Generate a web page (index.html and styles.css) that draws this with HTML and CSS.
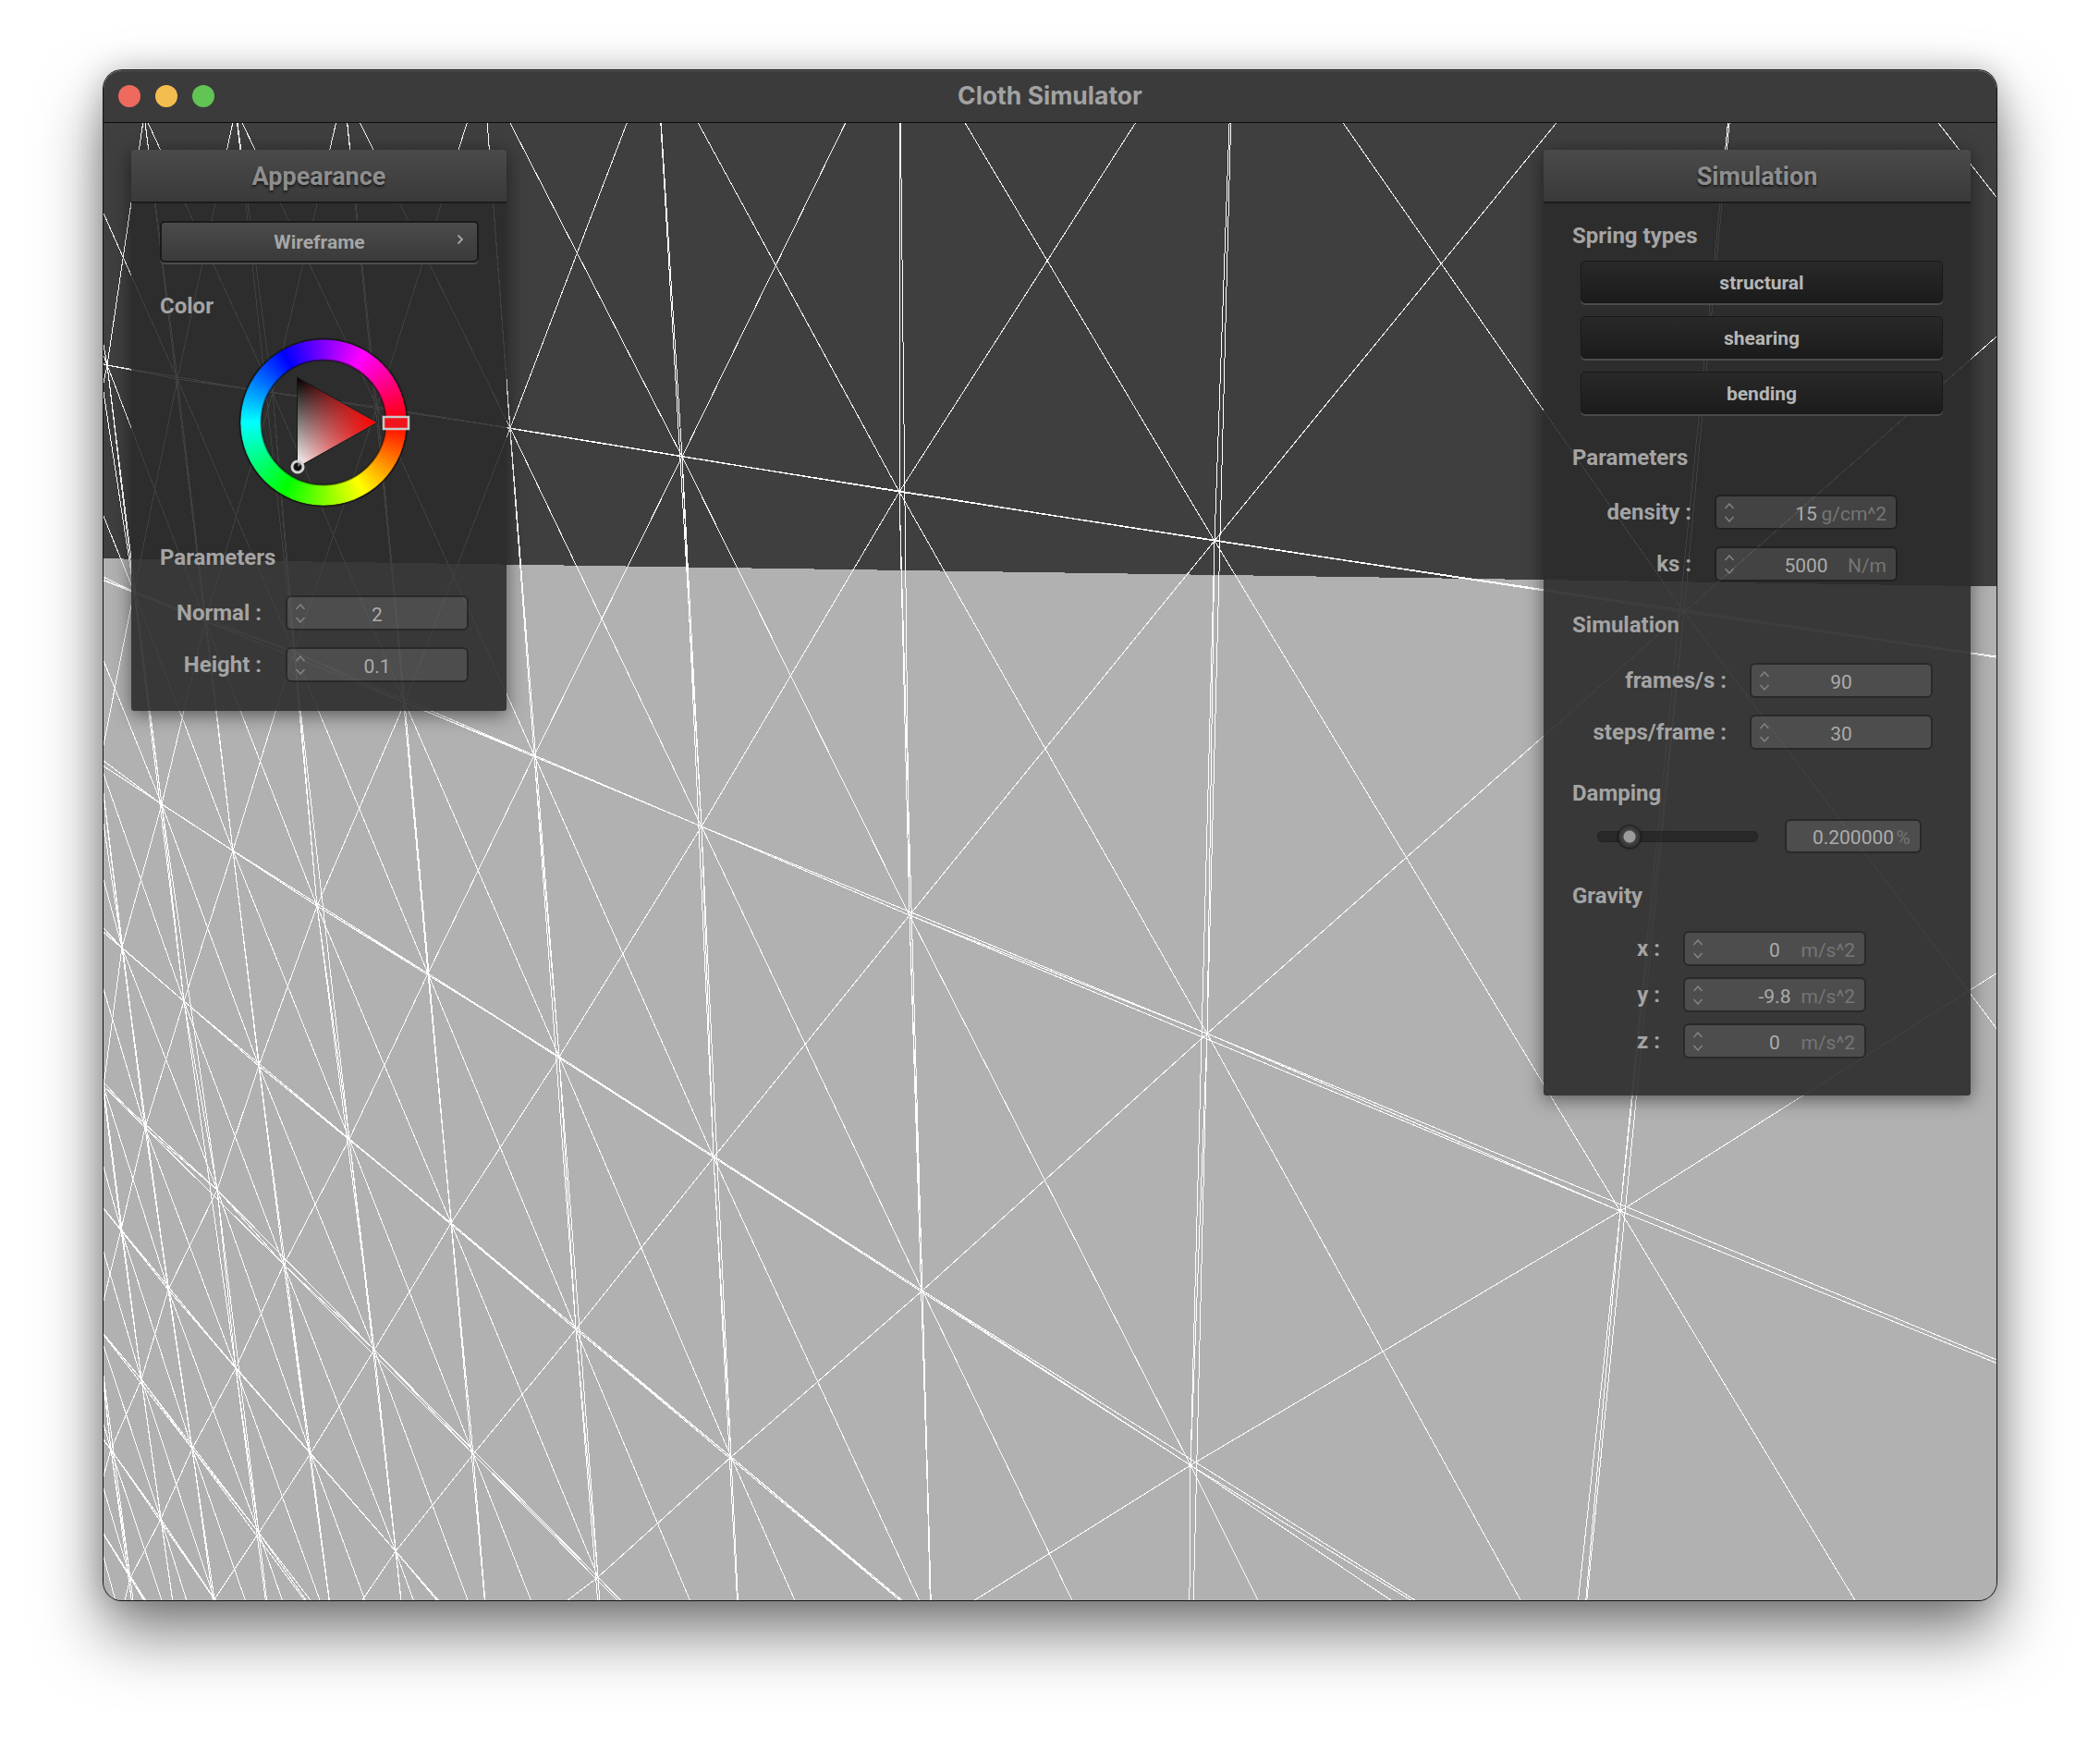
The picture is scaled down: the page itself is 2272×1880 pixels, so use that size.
FILE: index.html
```html
<!DOCTYPE html>
<html lang="en">
<head>
<meta charset="utf-8">
<title>Cloth Simulator</title>
<link rel="stylesheet" href="styles.css">
</head>
<body>
<main class="window">
  <header class="titlebar">
    <div class="lights">
      <span class="light light--close"></span>
      <span class="light light--min"></span>
      <span class="light light--max"></span>
    </div>
    <h1 class="titlebar__title">Cloth Simulator</h1>
  </header>
  <section class="canvas">
    <svg class="scene" viewBox="112 133 2048 1598" aria-hidden="true">
      <polygon class="scene__floor" points="100,604 2170,634.5 2170,1740 100,1740"></polygon>
      <path id="mesh" class="scene__mesh"></path>
    </svg>

    <aside class="panel panel--appearance">
      <h2 class="panel__head">Appearance</h2>
      <div class="panel__body">
        <button class="btn btn--popup">Wireframe
          <svg class="btn__chevron" viewBox="0 0 8 12"><path d="M1.5 1.5 L6 6 L1.5 10.5"></path></svg>
        </button>
        <h3 class="group group--color">Color</h3>
        <div class="wheel">
          <div class="wheel__ring"></div>
          <svg class="wheel__overlay" viewBox="0 0 180 180">
            <defs>
              <linearGradient id="sv-value" gradientUnits="userSpaceOnUse" x1="62" y1="138" x2="62" y2="42">
                <stop offset="0" stop-color="#fff"></stop>
                <stop offset="1" stop-color="#000"></stop>
              </linearGradient>
              <linearGradient id="sv-hue" gradientUnits="userSpaceOnUse" x1="62" y1="90" x2="147" y2="90">
                <stop offset="0" stop-color="#f00" stop-opacity="0"></stop>
                <stop offset="1" stop-color="#f00"></stop>
              </linearGradient>
            </defs>
            <circle class="wheel__edge" cx="90" cy="90" r="90.5"></circle>
            <circle class="wheel__edge" cx="90" cy="90" r="67.5"></circle>
            <polygon class="wheel__tri-edge" points="147,90 62,42 62,138"></polygon>
            <polygon fill="url(#sv-value)" points="147,90 62,42 62,138"></polygon>
            <polygon fill="url(#sv-hue)" points="147,90 62,42 62,138"></polygon>
            <circle class="wheel__pick" cx="62" cy="138" r="6"></circle>
            <rect class="wheel__hue" x="155" y="84" width="27" height="13"></rect>
          </svg>
        </div>
        <h3 class="group group--params">Parameters</h3>
        <div class="fields fields--low">
          <div class="field field--appearance">
            <label class="field__label">Normal :</label>
            <div class="num">
              <svg class="num__spin" viewBox="0 0 10 21"><path d="M0.5 6 L5 1 L9.5 6 M0.5 15 L5 20 L9.5 15"></path></svg>
              <span class="num__value">2</span>
            </div>
          </div>
          <div class="field field--appearance">
            <label class="field__label">Height :</label>
            <div class="num">
              <svg class="num__spin" viewBox="0 0 10 21"><path d="M0.5 6 L5 1 L9.5 6 M0.5 15 L5 20 L9.5 15"></path></svg>
              <span class="num__value">0.1</span>
            </div>
          </div>
        </div>
      </div>
    </aside>

    <aside class="panel panel--simulation">
      <h2 class="panel__head">Simulation</h2>
      <div class="panel__body">
        <h3 class="group group--springs">Spring types</h3>
        <div class="toggles">
          <button class="btn btn--on">structural</button>
          <button class="btn btn--on">shearing</button>
          <button class="btn btn--on">bending</button>
        </div>
        <h3 class="group group--sim-params">Parameters</h3>
        <div class="fields">
          <div class="field field--params">
            <label class="field__label">density :</label>
            <div class="num">
              <svg class="num__spin" viewBox="0 0 10 21"><path d="M0.5 6 L5 1 L9.5 6 M0.5 15 L5 20 L9.5 15"></path></svg>
              <span class="num__value">15</span>
              <span class="num__unit">g/cm^2</span>
            </div>
          </div>
          <div class="field field--params">
            <label class="field__label">ks :</label>
            <div class="num">
              <svg class="num__spin" viewBox="0 0 10 21"><path d="M0.5 6 L5 1 L9.5 6 M0.5 15 L5 20 L9.5 15"></path></svg>
              <span class="num__value">5000</span>
              <span class="num__unit">N/m</span>
            </div>
          </div>
        </div>
        <h3 class="group group--sim">Simulation</h3>
        <div class="fields fields--low">
          <div class="field field--rate">
            <label class="field__label">frames/s :</label>
            <div class="num">
              <svg class="num__spin" viewBox="0 0 10 21"><path d="M0.5 6 L5 1 L9.5 6 M0.5 15 L5 20 L9.5 15"></path></svg>
              <span class="num__value">90</span>
            </div>
          </div>
          <div class="field field--rate">
            <label class="field__label">steps/frame :</label>
            <div class="num">
              <svg class="num__spin" viewBox="0 0 10 21"><path d="M0.5 6 L5 1 L9.5 6 M0.5 15 L5 20 L9.5 15"></path></svg>
              <span class="num__value">30</span>
            </div>
          </div>
        </div>
        <h3 class="group group--damping">Damping</h3>
        <div class="damping">
          <div class="slider"><span class="slider__thumb"></span></div>
          <div class="num num--plain">
            <span></span>
            <span class="num__value">0.200000</span>
            <span class="num__unit">%</span>
          </div>
        </div>
        <h3 class="group group--gravity">Gravity</h3>
        <div class="fields fields--tight">
          <div class="field field--gravity">
            <label class="field__label">x :</label>
            <div class="num">
              <svg class="num__spin" viewBox="0 0 10 21"><path d="M0.5 6 L5 1 L9.5 6 M0.5 15 L5 20 L9.5 15"></path></svg>
              <span class="num__value">0</span>
              <span class="num__unit">m/s^2</span>
            </div>
          </div>
          <div class="field field--gravity">
            <label class="field__label">y :</label>
            <div class="num">
              <svg class="num__spin" viewBox="0 0 10 21"><path d="M0.5 6 L5 1 L9.5 6 M0.5 15 L5 20 L9.5 15"></path></svg>
              <span class="num__value">-9.8</span>
              <span class="num__unit">m/s^2</span>
            </div>
          </div>
          <div class="field field--gravity">
            <label class="field__label">z :</label>
            <div class="num">
              <svg class="num__spin" viewBox="0 0 10 21"><path d="M0.5 6 L5 1 L9.5 6 M0.5 15 L5 20 L9.5 15"></path></svg>
              <span class="num__value">0</span>
              <span class="num__unit">m/s^2</span>
            </div>
          </div>
        </div>
      </div>
    </aside>
  </section>
</main>
<script src="mesh.js"></script>
</body>
</html>
```

FILE: styles.css
```css
* { box-sizing: border-box; }

html, body { margin: 0; height: 100%; background: #fff; }

body {
  padding: 76px 112px 0;
  font-family: Roboto, "Liberation Sans", sans-serif;
  overflow: hidden;
}

/* ---------- window ---------- */
.window {
  width: 2048px;
  height: 1655px;
  border-radius: 20px;
  box-shadow:
    0 0 0 1px #141414,
    0 36px 70px rgba(0, 0, 0, .5),
    0 0 34px rgba(0, 0, 0, .22);
  display: flex;
  flex-direction: column;
}

.titlebar {
  position: relative;
  flex: none;
  height: 57px;
  display: flex;
  align-items: center;
  justify-content: center;
  padding-bottom: 4px;
  background: #3b3b3b;
  border-bottom: 1px solid #0c0c0c;
  border-top: 1px solid #5a5a5a;
  border-radius: 20px 20px 0 0;
}

.titlebar__title {
  margin: 0;
  font: 700 26.5px Inter, Roboto, sans-serif;
  color: #a2a2a2;
}

.lights {
  position: absolute;
  left: 16px;
  top: 15px;
  display: flex;
  gap: 16px;
}

.light { width: 24px; height: 24px; border-radius: 50%; }
.light--close { background: #ee6a5f; }
.light--min { background: #f5bd4f; }
.light--max { background: #61c454; }

.canvas {
  position: relative;
  flex: 1;
  background: #3f3f3f;
  border-radius: 0 0 20px 20px;
  overflow: hidden;
}

.scene { display: block; width: 100%; height: 100%; }
.scene__floor { fill: #b1b1b1; shape-rendering: crispEdges; }
.scene__mesh { fill: none; stroke: #fff; stroke-width: 1; shape-rendering: crispEdges; }

/* ---------- panels ---------- */
.panel {
  position: absolute;
  top: 29px;
  background: rgba(43, 43, 43, .9);
  border-radius: 3px;
  box-shadow: 0 4px 20px rgba(0, 0, 0, .5);
}

.panel--appearance { left: 30px; width: 406px; height: 607px; }
.panel--simulation { right: 28px; width: 462px; height: 1023px; }

.panel__head {
  margin: 0;
  height: 58px;
  display: flex;
  align-items: center;
  justify-content: center;
  padding-top: 1px;
  font-size: 27px;
  font-weight: 700;
  color: #8e8e8e;
  text-shadow: 0 2px 3px rgba(0, 0, 0, .65);
  background: linear-gradient(#4a4a4a, #3a3a3a);
  border-bottom: 2px solid #1c1c1c;
  border-radius: 3px 3px 0 0;
}

.panel__body { padding: 0 30px 0 31px; }

.group {
  margin: 0;
  font-size: 24px;
  line-height: 30px;
  font-weight: 700;
  color: #a4a4a4;
}

.group--color { margin-top: 32px; }
.group--params { margin-top: 41px; }
.group--springs { margin-top: 20px; }
.group--sim-params { margin-top: 32px; }
.group--sim { margin-top: 32px; }
.group--damping { margin-top: 32px; }
.group--gravity { margin-top: 31px; }

/* ---------- buttons ---------- */
.btn {
  display: block;
  position: relative;
  font: 700 21px Roboto, sans-serif;
  text-align: center;
  border-radius: 5px;
  border: 2px solid #1b1b1b;
  padding: 1px 0 0;
  cursor: pointer;
}

.btn--popup {
  width: 345px;
  height: 45px;
  margin: 19px 0 2px;
  color: #a6a6a6;
  background: linear-gradient(#4b4b4b, #3a3a3a);
  box-shadow: 0 2px 0 #4c4c4c;
}

.btn__chevron {
  position: absolute;
  right: 14px;
  top: 12px;
  width: 8px;
  height: 12px;
  fill: none;
  stroke: #a6a6a6;
  stroke-width: 1.8;
}

.toggles {
  display: grid;
  gap: 14px;
  width: 392px;
  margin: 12px 0 0 9px;
}

.btn--on {
  height: 46px;
  color: #b6b6b6;
  border-width: 1px;
  border-color: #191919;
  background: linear-gradient(#292929, #1b1b1b);
  box-shadow: 0 2px 0 #4b4b4b;
}

/* ---------- colour wheel ---------- */
.wheel {
  position: relative;
  width: 180px;
  height: 180px;
  margin: 21px 0 0 87px;
}

.wheel__ring {
  position: absolute;
  inset: 0;
  border-radius: 50%;
  background: conic-gradient(from 90deg, #f00, #ff0, #0f0, #0ff, #00f, #f0f, #f00);
  -webkit-mask: radial-gradient(circle, transparent 67px, #000 68px);
  mask: radial-gradient(circle, transparent 67px, #000 68px);
}

.wheel__overlay { position: absolute; inset: 0; width: 180px; height: 180px; overflow: visible; }
.wheel__edge { fill: none; stroke: rgba(0, 0, 0, .45); stroke-width: 2; }
.wheel__tri-edge { fill: none; stroke: rgba(0, 0, 0, .45); stroke-width: 2; }
.wheel__pick { fill: rgba(0, 0, 0, .55); stroke: #d2d2d2; stroke-width: 3; }
.wheel__hue { fill: #f0141c; stroke: #c8c8c8; stroke-width: 2.5; }

/* ---------- number fields ---------- */
.fields { display: grid; gap: 18px; margin-top: 25px; }
.fields--low { margin-top: 26px; }
.fields--tight { gap: 12px; margin-top: 23px; }

.field { display: flex; align-items: center; gap: 26px; }
.field--params, .field--rate, .field--gravity { gap: 25px; }

.field__label {
  flex: none;
  font-size: 24px;
  font-weight: 700;
  color: #a4a4a4;
  text-align: right;
}

.field--appearance .field__label { width: 110px; }
.field--params .field__label { width: 129px; }
.field--rate .field__label { width: 167px; }
.field--gravity .field__label { width: 95px; }

.num {
  display: grid;
  grid-template-columns: 1fr auto 1fr;
  align-items: center;
  width: 198px;
  height: 38px;
  padding: 0 10px;
  font-size: 21px;
  color: #ababab;
  background: rgba(255, 255, 255, .105);
  background-clip: padding-box;
  border: 2px solid rgba(0, 0, 0, .26);
  border-radius: 6px;
}

.num__spin {
  width: 10px;
  height: 21px;
  margin-left: -1px;
  fill: none;
  stroke: #868686;
  stroke-width: 1.4;
}

.num__value { padding-top: 3px; }

.num__unit {
  justify-self: end;
  padding-top: 3px;
  color: #757575;
}

.damping {
  display: flex;
  align-items: center;
  gap: 29px;
  margin: 13px 0 0 27px;
}

.slider {
  position: relative;
  width: 174px;
  height: 12px;
  border-radius: 5px;
  background: rgba(0, 0, 0, .27);
  box-shadow: inset 0 0 0 1px rgba(0, 0, 0, .1);
}

.slider__thumb {
  position: absolute;
  left: 23px;
  top: -6px;
  width: 24px;
  height: 24px;
  border-radius: 50%;
  background: radial-gradient(circle, #9c9c9c 0 6px, #454545 7px, #2f2f2f 12px);
  box-shadow: 0 0 0 1px rgba(0, 0, 0, .35), 0 1px 3px rgba(0, 0, 0, .5);
}

.num--plain {
  width: 148px;
  height: 37px;
}
```

FILE: mesh.js
```js
// Projected cloth vertices, one list per column, starting at the row above the view.
var columns = [
  [[2800,-200],[2600,775],[2550,1632],[2350,2300]],
  [[1895,-125],[1822,662],[1753,1310],[1706,1841],[1646,2300]],
  [[1336,-35],[1314,585],[1306,1118],[1288,1585],[1285,1990]],
  [[973,14],[973,532],[984,990],[998,1396],[1008,1760],[1015,2080]],
  [[710,50],[738,494],[759,894],[772,1252],[791,1576],[805,1870]],
  [[523,77],[552,463],[578,817],[605,1143],[623,1438],[647,1706],[665,1960]],
  [[372,97],[408,440],[438,760],[463,1053],[488,1323],[512,1573],[530,1795],[545,2000]],
  [[255,118],[295,425],[318,705],[343,980],[378,1232],[405,1460],[428,1678],[450,1880]],
  [[156,124],[192,410],[222,672],[252,920],[280,1153],[307,1368],[336,1572],[362,1775],[385,1960]],
  [[67,130],[116,395],[145,640],[175,870],[199,1083],[235,1287],[255,1480],[280,1658],[300,1830],[320,2000]],
  [[0,100],[40,380],[70,611],[108,826],[132,1025],[157,1220],[182,1395],[208,1567],[232,1730],[252,1890]],
  [[-20,90],[10,365],[40,590],[68,790],[87,987],[112,1175],[131,1330],[153,1492],[174,1643],[195,1790]],
  [[-50,80],[-20,340],[10,570],[35,760],[60,950],[75,1130],[90,1280],[105,1435],[120,1568],[141,1707],[160,1860]],
  [[-80,70],[-60,320],[-30,550],[0,730],[25,920],[40,1090],[50,1235],[68,1390],[85,1520],[100,1640],[118,1800]]
];

function vertex(c, r) {
  return columns[c] && columns[c][r];
}

var d = [];
function edge(a, b) {
  if (a && b) d.push("M" + a[0] + " " + a[1] + "L" + b[0] + " " + b[1]);
}

columns.forEach(function (col, c) {
  col.forEach(function (p, r) {
    edge(p, vertex(c + 1, r));        // structural
    edge(p, vertex(c, r + 1));
    edge(p, vertex(c + 1, r + 1));    // shearing
    edge(vertex(c + 1, r), vertex(c, r + 1));
    edge(p, vertex(c + 2, r));        // bending
    edge(p, vertex(c, r + 2));
  });
});

document.getElementById("mesh").setAttribute("d", d.join(""));
```
